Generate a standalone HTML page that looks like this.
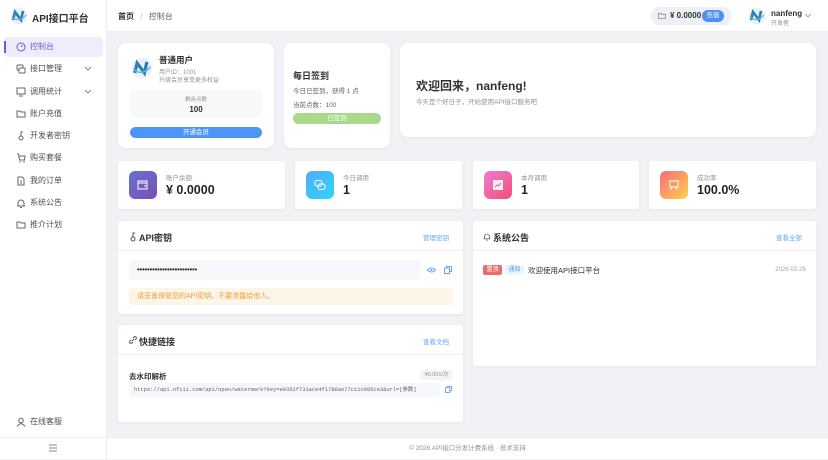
<!DOCTYPE html>
<html><head><meta charset="utf-8"><style>
*{box-sizing:border-box;margin:0;padding:0}
body{width:828px;height:459px;overflow:hidden;background:#f0f2f5;font-family:"Liberation Sans","Noto Sans CJK SC",sans-serif;color:#303133;position:relative}
.abs{position:absolute}
.side{left:0;top:0;width:107px;height:459px;background:#fff;border-right:1px solid #eceef2}
.nav{position:absolute;left:4px;width:99px;height:20px;font-size:8px;color:#4a4f5a;line-height:20px;padding-left:26px}
.nav svg{position:absolute;left:12px;top:5px}
.nav .chev{left:80px;top:7px}
.card{position:absolute;background:#fff;border-radius:8px;box-shadow:0 1px 4px rgba(0,0,0,.05)}
.sq{border-radius:3px}
.stat .ic{position:absolute;left:11px;top:10px;width:28px;height:28px;border-radius:6px}
.stat .l{position:absolute;left:48px;top:11px;font-size:6.5px;color:#909399}
.stat .v{position:absolute;left:48px;top:22px;font-size:12.5px;font-weight:bold;color:#1f2329}
.hd{position:absolute;left:0;right:0;top:0;height:30px;border-bottom:1px solid #eef0f3}
.ttl{position:absolute;left:11px;top:10px;font-size:9px;font-weight:bold;color:#303133}
.lnk{position:absolute;right:14px;top:11px;font-size:6.5px;color:#6aa3f5}
</style></head><body>
<div class="abs side">
  <svg class="abs" style="left:10px;top:7px" width="18" height="18" viewBox="0 0 18 18"><circle cx="9" cy="9" r="8.5" fill="#e8f2f8"/><path d="M3 13 L5 5 L11 13 L13 4" stroke="#2a7fb5" stroke-width="2.6" fill="none"/><path d="M2 10 Q9 16 16 8" stroke="#6ab5d8" stroke-width="1.2" fill="none"/></svg>
  <div class="abs" style="left:32px;top:10px;font-size:10px;font-weight:bold;color:#303133">API接口平台</div>
  <div class="nav" style="top:37px;background:#efedfb;color:#6b5bd8;border-radius:4px"><div class="abs" style="left:0;top:4px;width:2px;height:12px;background:#6b5bd8"></div><svg width="10" height="10" viewBox="0 0 10 10"><circle cx="5" cy="5" r="4" stroke="#6b5bd8" fill="none"/><path d="M5 5 L6.5 3" stroke="#6b5bd8"/></svg>控制台</div>
  <div class="nav" style="top:59px"><svg width="10" height="10" viewBox="0 0 10 10"><rect x="1" y="1" width="6" height="5" rx="1" stroke="#666" fill="none"/><rect x="3" y="4" width="6" height="5" rx="1" stroke="#666" fill="#fff"/></svg>接口管理<svg class="chev" width="8" height="6" viewBox="0 0 8 6"><path d="M1 1 L4 4 L7 1" stroke="#888" fill="none"/></svg></div>
  <div class="nav" style="top:82px"><svg width="10" height="10" viewBox="0 0 10 10"><rect x="1" y="1" width="8" height="6" stroke="#666" fill="none"/><path d="M3 9 H7" stroke="#666"/></svg>调用统计<svg class="chev" width="8" height="6" viewBox="0 0 8 6"><path d="M1 1 L4 4 L7 1" stroke="#888" fill="none"/></svg></div>
  <div class="nav" style="top:104px"><svg width="10" height="10" viewBox="0 0 10 10"><path d="M1 2 H4 L5 3 H9 V8 H1 Z" stroke="#666" fill="none"/></svg>账户充值</div>
  <div class="nav" style="top:126px"><svg width="10" height="10" viewBox="0 0 10 10"><circle cx="5" cy="7" r="2" stroke="#666" fill="none"/><path d="M5 5 V1 H7" stroke="#666" fill="none"/></svg>开发者密钥</div>
  <div class="nav" style="top:148px"><svg width="10" height="10" viewBox="0 0 10 10"><path d="M1 1 H2.5 L3.5 7 H8.5 L9 3 H3" stroke="#666" fill="none"/><circle cx="4" cy="9" r=".7" fill="#666"/><circle cx="8" cy="9" r=".7" fill="#666"/></svg>购买套餐</div>
  <div class="nav" style="top:171px"><svg width="10" height="10" viewBox="0 0 10 10"><path d="M2 1 H6 L8 3 V9 H2 Z M4 5 H6 M4 7 H6" stroke="#666" fill="none"/></svg>我的订单</div>
  <div class="nav" style="top:193px"><svg width="10" height="10" viewBox="0 0 10 10"><path d="M2 8 V5 A3 3 0 0 1 8 5 V8 Z M1 8 H9 M4 9.5 H6" stroke="#666" fill="none"/></svg>系统公告</div>
  <div class="nav" style="top:215px"><svg width="10" height="10" viewBox="0 0 10 10"><path d="M1 2 H4 L5 3 H9 V8 H1 Z" stroke="#666" fill="none"/></svg>推介计划</div>
  <div class="nav" style="top:412px"><svg width="10" height="10" viewBox="0 0 10 10"><circle cx="5" cy="3.5" r="2.3" stroke="#666" fill="none"/><path d="M1 9.5 Q5 4 9 9.5" stroke="#666" fill="none"/></svg>在线客服</div>
  <div class="abs" style="left:0;top:437px;width:107px;border-top:1px solid #eef0f3"></div>
  <svg class="abs" style="left:49px;top:444px" width="8" height="8" viewBox="0 0 8 8"><path d="M0 1 H8 M0 4 H8 M0 7 H8" stroke="#888"/></svg>
</div>
<div class="abs" style="left:107px;top:0;width:721px;height:32px;background:#fff;border-bottom:1px solid #eceef2"></div>
<div class="abs" style="left:118px;top:11px;font-size:8px;color:#303133"><b>首页</b> <span style="color:#bbb;margin:0 4px">/</span> <span style="color:#606266">控制台</span></div>
<div class="abs" style="left:651px;top:7px;width:81px;height:18px;border-radius:9px;background:#eef0f5"></div>
<svg class="abs" style="left:658px;top:12px" width="8" height="8" viewBox="0 0 8 8"><path d="M0.5 1.5 H3 L3.5 2.3 H7.5 V6.5 H0.5 Z" stroke="#888" fill="none" stroke-width=".8"/></svg>
<div class="abs" style="left:670px;top:11px;font-size:8px;font-weight:bold;color:#303133">¥ 0.0000</div>
<div class="abs" style="left:702px;top:10px;width:22px;height:12px;border-radius:6px;background:#4c8ff5;color:#fff;font-size:6.5px;text-align:center;line-height:12px">充值</div>
<svg class="abs" style="left:748px;top:7px" width="18" height="18" viewBox="0 0 18 18"><circle cx="9" cy="9" r="8.5" fill="#e8f2f8"/><path d="M3 13 L5 5 L11 13 L13 4" stroke="#2a7fb5" stroke-width="2.6" fill="none"/><path d="M2 10 Q9 16 16 8" stroke="#6ab5d8" stroke-width="1.2" fill="none"/></svg>
<div class="abs" style="left:771px;top:9px;font-size:8px;font-weight:bold;color:#303133">nanfeng</div>
<div class="abs" style="left:771px;top:18px;font-size:6px;color:#909399">开发者</div>
<svg class="abs" style="left:804px;top:13px" width="8" height="6" viewBox="0 0 8 6"><path d="M1 1 L4 4 L7 1" stroke="#aaa" fill="none"/></svg>

<div class="card" style="left:118px;top:43px;width:156px;height:105px">
  <svg class="abs" style="left:13px;top:14px" width="22" height="22" viewBox="0 0 18 18"><circle cx="9" cy="9" r="8.5" fill="#e8f2f8"/><path d="M3 13 L5 5 L11 13 L13 4" stroke="#2a7fb5" stroke-width="2.6" fill="none"/><path d="M2 10 Q9 16 16 8" stroke="#6ab5d8" stroke-width="1.2" fill="none"/></svg>
  <div class="abs" style="left:41px;top:11px;font-size:8.5px;font-weight:bold">普通用户</div>
  <div class="abs" style="left:41px;top:24px;font-size:6px;color:#909399">用户ID：1001</div>
  <div class="abs" style="left:41px;top:32px;font-size:6px;color:#909399">升级会员享受更多权益</div>
  <div class="abs" style="left:12px;top:47px;width:132px;height:28px;background:#f7f8fa;border-radius:4px;text-align:center"><div style="font-size:5.5px;color:#909399;margin-top:5px">剩余点数</div><div style="font-size:8px;font-weight:bold;margin-top:2px">100</div></div>
  <div class="abs" style="left:12px;top:84px;width:132px;height:11px;background:#4c96f7;border-radius:6px;color:#fff;font-size:6.5px;text-align:center;line-height:11px">开通会员</div>
</div>
<div class="card" style="left:284px;top:43px;width:106px;height:105px">
  <div class="abs" style="left:9px;top:26px;font-size:9px;font-weight:bold">每日签到</div>
  <div class="abs" style="left:9px;top:42px;font-size:6.5px;color:#606266">今日已签到，获得 1 点</div>
  <div class="abs" style="left:9px;top:56px;font-size:6.5px;color:#606266">当前点数：100</div>
  <div class="abs" style="left:9px;top:70px;width:88px;height:11px;border-radius:6px;background:#a8d98c;color:#fff;font-size:6.5px;text-align:center;line-height:11px">已签到</div>
</div>
<div class="card" style="left:400px;top:43px;width:416px;height:94px">
  <div class="abs" style="left:16px;top:34px;font-size:12px;font-weight:bold;color:#303133">欢迎回来，nanfeng!</div>
  <div class="abs" style="left:16px;top:53px;font-size:6.5px;color:#909399">今天是个好日子，开始使用API接口服务吧</div>
</div>

<div class="card sq stat" style="left:118px;top:161px;width:167px;height:48px"><div class="ic" style="background:linear-gradient(135deg,#6a6fd6,#7b4fb0)"></div><svg class="abs" style="left:19px;top:18px" width="12" height="12" viewBox="0 0 12 12"><path d="M1 2 H10 V10 H1 Z M1 4 H10 M7 7 H9" stroke="#fff" fill="none"/></svg><div class="l">账户余额</div><div class="v">¥ 0.0000</div></div>
<div class="card sq stat" style="left:295px;top:161px;width:167px;height:48px"><div class="ic" style="background:linear-gradient(135deg,#4facfe,#2fd6f5)"></div><svg class="abs" style="left:19px;top:18px" width="12" height="12" viewBox="0 0 12 12"><rect x="1" y="1.5" width="7" height="5.5" rx="2" stroke="#fff" fill="none"/><rect x="4" y="5" width="7" height="5.5" rx="2" stroke="#fff" fill="none"/></svg><div class="l">今日调用</div><div class="v">1</div></div>
<div class="card sq stat" style="left:473px;top:161px;width:166px;height:48px"><div class="ic" style="background:linear-gradient(135deg,#f07dd0,#ef4f7a)"></div><svg class="abs" style="left:19px;top:18px" width="12" height="12" viewBox="0 0 12 12"><rect x="1" y="1" width="10" height="10" fill="#fff" opacity=".9"/><path d="M3 8 L5 6 L6 7 L9 4" stroke="#ef5a8f" fill="none"/></svg><div class="l">本月调用</div><div class="v">1</div></div>
<div class="card sq stat" style="left:649px;top:161px;width:167px;height:48px"><div class="ic" style="background:linear-gradient(135deg,#f76b7c,#fdd24a)"></div><svg class="abs" style="left:19px;top:18px" width="12" height="12" viewBox="0 0 12 12"><path d="M1 2 H11 M2 2 V8 H10 V2 M4 8 L3 11 M8 8 L9 11" stroke="#fff" fill="none"/></svg><div class="l">成功率</div><div class="v">100.0%</div></div>

<div class="card sq" style="left:118px;top:221px;width:345px;height:93px">
  <div class="hd"></div>
  <svg class="abs" style="left:11px;top:11px" width="8" height="10" viewBox="0 0 8 10"><circle cx="4" cy="7" r="2" stroke="#555" fill="none"/><path d="M4 5 V1 H6" stroke="#555" fill="none"/></svg>
  <div class="ttl" style="left:21px">API密钥</div><div class="lnk">管理密钥</div>
  <div class="abs" style="left:11px;top:39px;width:291px;height:20px;background:#f5f7fa;border-radius:4px;font-size:8px;letter-spacing:-.3px;line-height:20px;padding-left:8px;color:#303133">••••••••••••••••••••••••</div>
  <svg class="abs" style="left:309px;top:46px" width="9" height="6" viewBox="0 0 9 6"><path d="M0.5 3 Q4.5 -1 8.5 3 Q4.5 7 0.5 3Z" stroke="#6aa3f5" fill="none"/><circle cx="4.5" cy="3" r="1" fill="#6aa3f5"/></svg>
  <svg class="abs" style="left:326px;top:45px" width="8" height="8" viewBox="0 0 8 8"><rect x="0.5" y="2" width="5" height="5.5" stroke="#6aa3f5" fill="none"/><path d="M2.5 2 V0.5 H7.5 V5.5 H5.5" stroke="#6aa3f5" fill="none"/></svg>
  <div class="abs" style="left:11px;top:67px;width:324px;height:17px;background:#fdf5e8;border-radius:3px;font-size:7px;line-height:17px;padding-left:8px;color:#e6a23c">请妥善保管您的API密钥，不要泄露给他人。</div>
</div>
<div class="card sq" style="left:118px;top:325px;width:345px;height:97px">
  <div class="hd"></div>
  <svg class="abs" style="left:11px;top:11px" width="8" height="8" viewBox="0 0 8 8"><path d="M3 5 L5 3 M2 4 L1 5 A1.4 1.4 0 0 0 3 7 L4 6 M4 2 L5 1 A1.4 1.4 0 0 1 7 3 L6 4" stroke="#555" fill="none"/></svg>
  <div class="ttl" style="left:21px">快捷链接</div><div class="lnk">查看文档</div>
  <div class="abs" style="left:11px;top:46px;font-size:7.5px;font-weight:bold">去水印解析</div>
  <div class="abs" style="left:302px;top:45px;width:33px;height:10px;background:#f4f4f5;border-radius:3px;font-size:5.5px;color:#909399;text-align:center;line-height:10px">¥0.001/次</div>
  <div class="abs" style="left:11px;top:58px;width:311px;height:14px;background:#f5f7fa;border-radius:3px;font-family:'Liberation Mono','Noto Sans CJK SC',monospace;font-size:5.4px;line-height:14px;padding-left:5px;color:#606266;white-space:nowrap;overflow:hidden">https://api.nfiii.com/api/open/watermark?key=e9352f731ace4f1786ae77c11c095ce3&amp;url=[参数]</div>
  <svg class="abs" style="left:327px;top:61px" width="7" height="7" viewBox="0 0 8 8"><rect x="0.5" y="2" width="5" height="5.5" stroke="#6aa3f5" fill="none"/><path d="M2.5 2 V0.5 H7.5 V5.5 H5.5" stroke="#6aa3f5" fill="none"/></svg>
</div>
<div class="card sq" style="left:473px;top:221px;width:343px;height:145px">
  <div class="hd"></div>
  <svg class="abs" style="left:10px;top:11px" width="8" height="9" viewBox="0 0 10 10"><path d="M2 8 V5 A3 3 0 0 1 8 5 V8 Z M1 8 H9 M4 9.5 H6" stroke="#555" fill="none"/></svg>
  <div class="ttl" style="left:20px">系统公告</div><div class="lnk">查看全部</div>
  <div class="abs" style="left:10px;top:44px;width:19px;height:10px;background:#ec6b6b;border-radius:2px;color:#fff;font-size:6px;text-align:center;line-height:10px">置顶</div>
  <div class="abs" style="left:32px;top:44px;width:19px;height:10px;background:#ecf3fe;border-radius:2px;color:#5a9cf5;font-size:6px;text-align:center;line-height:10px">通知</div>
  <div class="abs" style="left:55px;top:44px;font-size:7.5px;color:#303133">欢迎使用API接口平台</div>
  <div class="abs" style="right:10px;top:46px;font-size:6px;color:#a0a4ab">2026-02-26</div>
</div>
<div class="abs" style="left:107px;top:437px;width:721px;height:22px;background:#fff;border-top:1px solid #eceef2;text-align:center;font-size:6.5px;color:#909399;line-height:22px">© 2026 API接口分发计费系统 · 技术支持</div>
</body></html>
